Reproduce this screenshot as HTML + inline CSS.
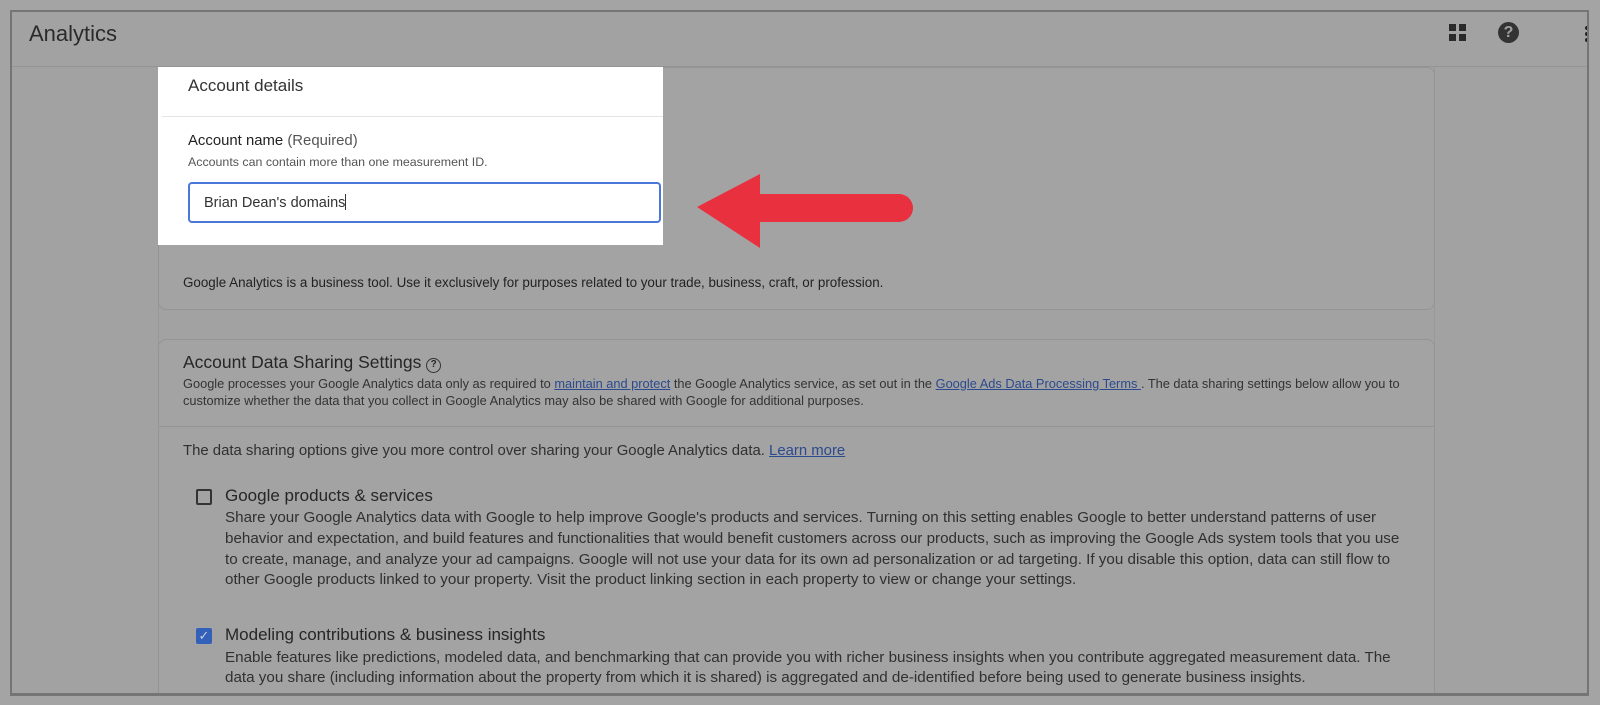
<!DOCTYPE html>
<html><head><meta charset="utf-8"><style>
*{margin:0;padding:0;box-sizing:border-box}
body{width:1600px;height:705px;background:#a4a4a4;font-family:"Liberation Sans",sans-serif;color:#2a2a2a;position:relative;overflow:hidden}
.frame{position:absolute;left:10px;top:10px;width:1579px;height:686px;border:2px solid #757575;border-bottom-width:3px;background:#a2a2a2;overflow:hidden}
.a{position:absolute;white-space:nowrap}
.card{position:absolute;border:1px solid #949494;border-radius:8px;background:#a3a3a3}
a{color:#2c4a8e;text-decoration:underline}
.s{font-size:12.8px;color:#333}
.b{font-size:15.2px;color:#303030}
</style></head><body>
<div class="frame">
 <div class="a" style="left:17px;top:9px;font-size:22px;color:#2b2b2b">Analytics</div>
 <div style="position:absolute;left:1437px;top:12px;width:18px;height:18px">
  <div style="position:absolute;left:0;top:0;width:7px;height:7px;background:#2a2a2a"></div>
  <div style="position:absolute;left:10px;top:0;width:7px;height:7px;background:#2a2a2a"></div>
  <div style="position:absolute;left:0;top:10px;width:7px;height:7px;background:#2a2a2a"></div>
  <div style="position:absolute;left:10px;top:10px;width:7px;height:7px;background:#2a2a2a"></div>
 </div>
 <div style="position:absolute;left:1486px;top:10px;width:21px;height:21px;border-radius:50%;background:#333;color:#a2a2a2;font-weight:bold;font-size:16px;text-align:center;line-height:21px">?</div>
 <div style="position:absolute;left:1573px;top:14px;width:4px;height:4px;background:#222;border-radius:2px"></div>
 <div style="position:absolute;left:1573px;top:20px;width:4px;height:4px;background:#222;border-radius:2px"></div>
 <div style="position:absolute;left:1573px;top:26px;width:4px;height:4px;background:#222;border-radius:2px"></div>
 <div style="position:absolute;left:0;top:54px;width:1600px;height:1px;background:#949494"></div>
 <div style="position:absolute;left:146px;top:55px;width:1px;height:700px;background:#999"></div>
 <div style="position:absolute;left:1422px;top:55px;width:1px;height:700px;background:#999"></div>

 <div class="card" style="left:146px;top:55px;width:1277px;height:243px"></div>
 <div class="a" style="left:171px;top:263px;font-size:13.4px;color:#222">Google Analytics is a business tool. Use it exclusively for purposes related to your trade, business, craft, or profession.</div>

 <div class="card" style="left:146px;top:327px;width:1277px;height:400px"></div>
 <div style="position:absolute;left:147px;top:414px;width:1275px;height:1px;background:#959595"></div>
 <div class="a" style="left:171px;top:340px;font-size:17.5px;color:#262626">Account Data Sharing Settings <span style="display:inline-block;width:15px;height:15px;border:1.5px solid #333;border-radius:50%;font-size:10px;text-align:center;line-height:12px;vertical-align:1px;font-weight:bold">?</span></div>
 <div class="a s" style="left:171px;top:364px">Google processes your Google Analytics data only as required to <a>maintain and protect</a> the Google Analytics service, as set out in the <a>Google Ads Data Processing Terms </a>. The data sharing settings below allow you to</div>
 <div class="a s" style="left:171px;top:381px">customize whether the data that you collect in Google Analytics may also be shared with Google for additional purposes.</div>
 <div class="a" style="left:171px;top:431px;font-size:14.9px;color:#303030">The data sharing options give you more control over sharing your Google Analytics data. <a>Learn more</a></div>

 <div style="position:absolute;left:184px;top:477px;width:16px;height:16px;border:2px solid #333;border-radius:2px"></div>
 <div class="a" style="left:213px;top:474px;font-size:17px;color:#262626">Google products &amp; services</div>
 <div class="a b" style="left:213px;top:497px">Share your Google Analytics data with Google to help improve Google's products and services. Turning on this setting enables Google to better understand patterns of user</div>
 <div class="a b" style="left:213px;top:518px">behavior and expectation, and build features and functionalities that would benefit customers across our products, such as improving the Google Ads system tools that you use</div>
 <div class="a b" style="left:213px;top:539px">to create, manage, and analyze your ad campaigns. Google will not use your data for its own ad personalization or ad targeting. If you disable this option, data can still flow to</div>
 <div class="a b" style="left:213px;top:559px">other Google products linked to your property. Visit the product linking section in each property to view or change your settings.</div>

 <div style="position:absolute;left:184px;top:616px;width:16px;height:16px;background:#3360b8;border-radius:2px;color:#ccd;font-size:13px;line-height:16px;text-align:center">✓</div>
 <div class="a" style="left:213px;top:613px;font-size:17px;color:#262626">Modeling contributions &amp; business insights</div>
 <div class="a b" style="left:213px;top:637px">Enable features like predictions, modeled data, and benchmarking that can provide you with richer business insights when you contribute aggregated measurement data. The</div>
 <div class="a b" style="left:213px;top:657px">data you share (including information about the property from which it is shared) is aggregated and de-identified before being used to generate business insights.</div>

 <div style="position:absolute;left:146px;top:55px;width:505px;height:178px;background:#fff">
  <div class="a" style="left:30px;top:9px;font-size:17px;color:#333">Account details</div>
  <div style="position:absolute;left:4px;top:49px;width:501px;height:1px;background:#e4e4e4"></div>
  <div class="a" style="left:30px;top:66px;font-size:14.9px;color:#222">Account name <span style="color:#555">(Required)</span></div>
  <div class="a" style="left:30px;top:88px;font-size:12.4px;color:#555">Accounts can contain more than one measurement ID.</div>
  <div style="position:absolute;left:30px;top:115px;width:473px;height:41px;border:2px solid #4a78d8;border-radius:4px"></div>
  <div class="a" style="left:46px;top:127px;font-size:14.5px;color:#333">Brian Dean's domains<span style="display:inline-block;width:1px;height:16px;background:#333;vertical-align:-3px"></span></div>
 </div>
</div>
<svg style="position:absolute;left:0;top:0" width="1600" height="705">
 <path d="M697 207 L760 174 L760 194 L899 194 A14 14 0 0 1 899 222 L760 222 L760 248 Z" fill="#e8303f"/>
</svg>
</body></html>
